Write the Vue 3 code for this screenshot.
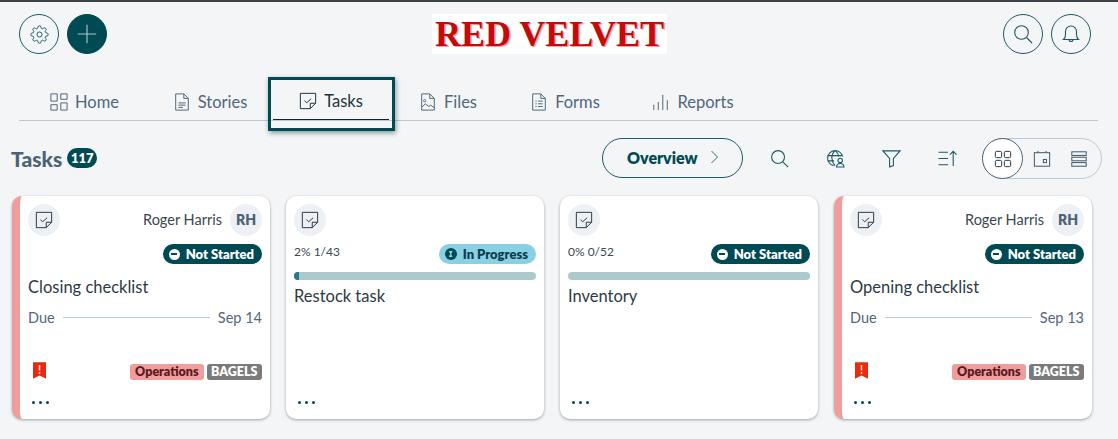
<template>
  <div class="page">
    <header class="top">
      <div class="top-left">
        <button class="round">
          <svg class="gear" viewBox="0 0 24 24"><circle cx="12" cy="12" r="3.2" /><path :d="gearPath" /></svg>
        </button>
        <button class="round solid">
          <svg class="plus" viewBox="0 0 24 24"><path d="M12 1v22M1 12h22" /></svg>
        </button>
      </div>
      <div class="logo">RED VELVET</div>
      <div class="top-right">
        <button class="round">
          <svg class="ic20" viewBox="0 0 20 20"><circle cx="8.5" cy="8.5" r="6.8" /><path d="M13.5 13.5l5.5 5.5" /></svg>
        </button>
        <button class="round">
          <svg class="ic20" viewBox="0 0 20 20"><path d="M2.5 15.5c1.6-1.4 2-2.6 2-5V7.5a5.500 5.500 0 0 1 11 0v3c0 2.400.4 3.600 2 5zM8 15.500a2 2 0 0 0 4 0" /></svg>
        </button>
      </div>
    </header>

    <nav class="tabs">
      <a v-for="tab in tabs" :key="tab.name" class="tab" :class="{ active: tab.name === 'Tasks' }" :style="{ width: tab.width + 'px' }">
        <svg class="tab-icon" viewBox="0 0 20 20"><path v-for="d in tab.paths" :key="d" :d="d" /></svg>
        <span>{{ tab.name }}</span>
      </a>
    </nav>

    <section class="toolbar">
      <h1 class="title">Tasks</h1>
      <span class="count">117</span>
      <div class="tools">
        <button class="overview">
          <span>Overview</span>
          <svg viewBox="0 0 12 20"><path d="M2 2l8 8-8 8" /></svg>
        </button>
        <svg class="tool" viewBox="0 0 20 20"><circle cx="8.500" cy="8.500" r="6.800" /><path d="M13.500 13.500l5.500 5.500" /></svg>
        <svg class="tool" viewBox="0 0 20 20">
          <path d="M17.500 8A8 8 0 1 0 8 17.500M1.500 7h16M1.500 12.500h7M9.500 1.500c-4.500 4.500-4.500 11 0 16M9.500 1.500c2.500 2.200 3.800 4.300 4 6.500" />
          <circle cx="15" cy="12" r="2.300" /><path d="M11 19c.3-2.600 1.800-3.800 4-3.800s3.700 1.200 4 3.800z" />
        </svg>
        <svg class="tool" viewBox="0 0 20 20"><path d="M1 2h18l-7 8v7.500l-4 1.500v-9z" /></svg>
        <svg class="tool" viewBox="0 0 20 20"><path d="M0.500 3.500h10M0.500 10h10M0.500 16.500h10M16 18V2.500M12.500 6L16 2.500 19.500 6" /></svg>
        <div class="views">
          <span class="view on">
            <svg viewBox="0 0 20 20"><rect x="1.500" y="1.500" width="7" height="7" rx="1.500" /><rect x="11.500" y="1.500" width="7" height="7" rx="1.500" /><rect x="1.500" y="11.500" width="7" height="7" rx="1.500" /><rect x="11.500" y="11.500" width="7" height="7" rx="1.500" /></svg>
          </span>
          <span class="view">
            <svg viewBox="0 0 20 20"><rect x="1.500" y="3" width="17" height="15" /><path d="M5.500 1v2M14.500 1v2" /><rect x="11.500" y="10.500" width="3.500" height="3.500" /></svg>
          </span>
          <span class="view">
            <svg viewBox="0 0 20 20"><rect x="2" y="2" width="16" height="4" /><rect x="2" y="8" width="16" height="4" /><rect x="2" y="14" width="16" height="4" /></svg>
          </span>
        </div>
      </div>
    </section>

    <main class="cards">
      <article v-for="card in cards" :key="card.title" class="card" :class="{ flagged: card.owner }">
        <div class="card-top">
          <span class="task-icon">
            <svg viewBox="0 0 20 20"><path d="M1.500 1.500h17v11l-6 6h-11z" /><path d="M18.500 12.500h-6v6" /><path d="M6 9.500l2.500 2.500 5-4.500" /></svg>
          </span>
          <template v-if="card.owner">
            <span class="owner">{{ card.owner }}</span>
            <span class="avatar">{{ card.initials }}</span>
          </template>
        </div>

        <div v-if="card.owner" class="status-row end">
          <span class="status dark"><i class="dot minus"></i>{{ card.status }}</span>
        </div>
        <template v-else>
          <div class="status-row">
            <span class="progress-text">{{ card.progress }}</span>
            <span class="status" :class="card.status === 'In Progress' ? 'light' : 'dark'">
              <i v-if="card.status === 'In Progress'" class="dot glass"></i>
              <i v-else class="dot minus"></i>{{ card.status }}
            </span>
          </div>
          <div class="bar"><div class="bar-fill" :style="{ width: card.percent + '%' }"></div></div>
        </template>

        <h2 class="card-title" :class="{ tight: !card.owner }">{{ card.title }}</h2>

        <div v-if="card.due" class="due">
          <span>Due</span>
          <span class="due-line"></span>
          <span>{{ card.due }}</span>
        </div>

        <div class="card-foot">
          <div v-if="card.owner" class="tags">
            <svg class="flag" viewBox="0 0 14 18"><path d="M0 0h14v18l-7-3.500L0 18z" /><path class="mark" d="M7 3v6M7 10.500v2" /></svg>
            <span class="tag pink">Operations</span>
            <span class="tag gray">BAGELS</span>
          </div>
          <div class="dots"><i></i><i></i><i></i></div>
        </div>
      </article>
    </main>
  </div>
</template>

<script setup>
const gearPath = 'M19.4 15a1.65 1.65 0 0 0 .33 1.82l.06.06a2 2 0 0 1 0 2.83 2 2 0 0 1-2.83 0l-.06-.06a1.65 1.65 0 0 0-1.82-.33 1.65 1.65 0 0 0-1 1.51V21a2 2 0 0 1-2 2 2 2 0 0 1-2-2v-.09A1.65 1.65 0 0 0 9 19.4a1.65 1.65 0 0 0-1.82.33l-.06.06a2 2 0 0 1-2.83 0 2 2 0 0 1 0-2.83l.06-.06a1.65 1.65 0 0 0 .33-1.82 1.65 1.65 0 0 0-1.51-1H3a2 2 0 0 1-2-2 2 2 0 0 1 2-2h.09A1.65 1.65 0 0 0 4.6 9a1.65 1.65 0 0 0-.33-1.82l-.06-.06a2 2 0 0 1 0-2.83 2 2 0 0 1 2.83 0l.06.06a1.65 1.65 0 0 0 1.82.33H9a1.65 1.65 0 0 0 1-1.51V3a2 2 0 0 1 2-2 2 2 0 0 1 2 2v.09a1.65 1.65 0 0 0 1 1.51 1.65 1.65 0 0 0 1.82-.33l.06-.06a2 2 0 0 1 2.83 0 2 2 0 0 1 0 2.83l-.06.06a1.65 1.65 0 0 0-.33 1.82V9a1.65 1.65 0 0 0 1.51 1H21a2 2 0 0 1 2 2 2 2 0 0 1-2 2h-.09a1.65 1.65 0 0 0-1.51 1z'

const tabs = [
  { name: 'Home', width: 131, paths: ['M1 1h7v8H1zM12 1h7v6h-7zM1 13h7v6H1zM12 11h7v8h-7z'] },
  { name: 'Stories', width: 120, paths: ['M3 1h9l5 5v13H3zM12 1v5h5M6 11h8M6 13.500h8M6 16h5'] },
  { name: 'Tasks', width: 116, paths: ['M1.500 1.500h17v11l-6 6h-11zM18.500 12.500h-6v6M6 9.500l2.500 2.500 5-4.500'] },
  { name: 'Files', width: 118, paths: ['M3 1h9l5 5v13H3zM12 1v5h5M3 16l4-4 4 3 2-1.500 4 3', 'M7.500 8.500a1.300 1.300 0 1 0 0 .1'] },
  { name: 'Forms', width: 116, paths: ['M3 1h9l5 5v13H3zM12 1v5h5M6 9h1.500M9 9h5M6 12h1.500M9 12h5M6 15h1.500M9 15h5'] },
  { name: 'Reports', width: 140, paths: ['M2 19v-6M7 19v-9M12 19V2M17 19V8'] }
]

const cards = [
  { title: 'Closing checklist', owner: 'Roger Harris', initials: 'RH', status: 'Not Started', due: 'Sep 14' },
  { title: 'Restock task', status: 'In Progress', progress: '2% 1/43', percent: 2 },
  { title: 'Inventory', status: 'Not Started', progress: '0% 0/52', percent: 0 },
  { title: 'Opening checklist', owner: 'Roger Harris', initials: 'RH', status: 'Not Started', due: 'Sep 13' }
]
</script>

<style>
html, body { margin: 0; background: #f3f5f7; overflow: hidden; }
</style>

<style scoped>
.page {
  --teal: #004a53;
  height: 439px;
  box-sizing: border-box;
  border-top: 2px solid #3b4245;
  background: #f3f5f7;
  font-family: Lato, "Noto Sans", sans-serif;
  color: #36454f;
  overflow: hidden;
}

svg { fill: none; stroke: currentColor; stroke-width: 1.2; display: block; }

.top {
  display: flex;
  align-items: center;
  justify-content: space-between;
  padding: 12px 27px 0 19px;
  height: 40px;
}
.top-left, .top-right { display: flex; gap: 8px; width: 220px; }
.top-right { justify-content: flex-end; }

.round {
  width: 40px;
  height: 40px;
  padding: 0;
  border: 1px solid #1d5a64;
  border-radius: 50%;
  background: transparent;
  color: #1d5a64;
  display: flex;
  align-items: center;
  justify-content: center;
}
.round.solid { background: var(--teal); border-color: var(--teal); color: #a3c4c7; }
.gear { width: 19px; height: 19px; stroke-width: 1.250; }
.plus { width: 20px; height: 20px; stroke-width: 1.400; }
.ic20 { width: 20px; height: 20px; stroke-width: 1.100; }

.logo {
  width: 235px;
  height: 40px;
  margin-right: 11px;
  background: #fff;
  text-align: center;
  font: bold 36px/41px "Liberation Serif", serif;
  white-space: nowrap;
  color: #c40a0a;
  text-shadow: 1.500px 1px 0 #f0a0a0;
}

.tabs {
  display: flex;
  margin: 29px 20px 0 19px;
  height: 37px;
  border-bottom: 1px solid #b8cad6;
}
.tab {
  height: 37px;
  box-sizing: border-box;
  display: flex;
  align-items: center;
  justify-content: center;
  gap: 7px;
  font-size: 16.500px;
  color: #52677a;
  position: relative;
}
.tab-icon { width: 18px; height: 18px; flex: none; stroke-width: 1.100; }
.tab.active { margin-left: 3px; color: #1f3440; border-bottom: 1px solid #14252d; }
.tab.active::after {
  content: "";
  position: absolute;
  left: -5px;
  right: -6px;
  top: -6px;
  bottom: -12px;
  border: 3px solid var(--teal);
  box-shadow: 1px 2px 5px rgba(0, 40, 45, 0.45);
}

.toolbar {
  display: flex;
  align-items: center;
  margin-top: 17px;
  height: 40px;
  padding: 0 11px;
}
.title { margin: 0; font-size: 21px; font-weight: 900; color: #4d6275; }
.count {
  margin-left: 5px;
  width: 30px;
  height: 20px;
  margin-top: -1px;
  border-radius: 10px;
  background: var(--teal);
  color: #fff;
  font-size: 13px;
  font-weight: 800;
  line-height: 20px;
  text-align: center;
}
.tools { margin-left: auto; display: flex; align-items: center; color: #1d5a64; }
.overview {
  width: 141px;
  height: 40px;
  padding: 0 23px 2px 24px;
  margin-right: 27px;
  border: 1px solid #1d5a64;
  border-radius: 20px;
  background: transparent;
  display: flex;
  align-items: center;
  justify-content: space-between;
  font: 800 16px Lato, sans-serif;
  color: var(--teal);
}
.overview svg { width: 9px; height: 16px; stroke-width: 1.200; color: #1d5a64; margin-left: 10px; }
.tool { width: 19px; height: 19px; margin-right: 37px; stroke-width: 1.150; }
.tool:nth-of-type(4) { margin-right: 25px; }
.views {
  width: 120px;
  height: 41px;
  margin: 1px 5px 0 0;
  padding-right: 3px;
  box-sizing: border-box;
  border: 1px solid #b8cad6;
  border-radius: 21px;
  display: flex;
  align-items: center;
  color: #3f5666;
}
.view { flex: 1; display: flex; align-items: center; justify-content: center; }
.view svg { width: 18px; height: 18px; stroke-width: 1.100; }
.view.on {
  flex: none;
  width: 41px;
  height: 41px;
  margin: -1px 0 -1px -1px;
  border: 1px solid #4d6275;
  border-radius: 50%;
  background: #fff;
  box-sizing: border-box;
  color: #26363f;
}

.cards {
  display: grid;
  grid-template-columns: repeat(4, 258px);
  gap: 16px;
  margin: 18px 0 0 12px;
}
.card {
  height: 223px;
  box-sizing: border-box;
  padding: 8px 8px 14px;
  background: #fff;
  border-radius: 10px;
  box-shadow: 0 1px 3px rgba(0, 0, 0, 0.35);
  display: flex;
  flex-direction: column;
  font-size: 14.500px;
}
.card.flagged { border-left: 8px solid #ef9d9d; }

.card-top { display: flex; align-items: center; height: 32px; gap: 8px; }
.task-icon {
  width: 32px;
  height: 32px;
  border-radius: 50%;
  background: #edf0f4;
  display: flex;
  align-items: center;
  justify-content: center;
  color: #2d3a44;
  margin-right: auto;
}
.task-icon svg { width: 18px; height: 18px; stroke-width: 1.100; }
.owner { color: #3a4750; padding-bottom: 2px; }
.avatar {
  width: 32px;
  height: 32px;
  border-radius: 50%;
  background: #edf0f4;
  color: #4d6275;
  font-size: 14px;
  font-weight: 800;
  line-height: 31px;
  text-align: center;
}

.status-row {
  display: flex;
  align-items: flex-start;
  justify-content: space-between;
  margin-top: 8px;
  height: 20px;
}
.status-row.end { justify-content: flex-end; }
.progress-text { font-size: 12px; line-height: 15px; color: #3a4750; }
.status {
  height: 20px;
  padding: 0 8px 0 6px;
  border-radius: 10px;
  display: flex;
  align-items: center;
  gap: 6px;
  font-size: 13px;
  font-weight: 800;
}
.status.dark { background: var(--teal); color: #fff; }
.status.light { background: #8ad0e4; color: #0f3f4d; }
.dot {
  width: 11px;
  height: 11px;
  border-radius: 50%;
  background: #fff;
  position: relative;
  flex: none;
}
.dot.minus::after {
  content: "";
  position: absolute;
  left: 2.500px;
  right: 2.500px;
  top: 4.500px;
  height: 2px;
  background: var(--teal);
}
.dot.glass { width: 12px; height: 12px; background: var(--teal); }
.dot.glass::after {
  content: "";
  position: absolute;
  left: 4px;
  top: 3px;
  width: 4px;
  height: 6px;
  background: #8ad0e4;
  clip-path: polygon(0 0, 100% 0, 60% 50%, 100% 100%, 0 100%, 40% 50%);
}

.bar {
  height: 8px;
  margin-top: 8px;
  border-radius: 4px;
  background: #acc9ce;
  overflow: hidden;
}
.bar-fill { height: 100%; background: #2a7788; }

.card-title {
  margin: 12px 0 0;
  font-size: 16.500px;
  font-weight: 400;
  line-height: 22px;
  color: #2d3a44;
}
.card-title.tight { margin-top: 5px; }

.due {
  display: flex;
  align-items: center;
  gap: 8px;
  margin-top: 9px;
  height: 20px;
  color: #52677a;
}
.due-line { flex: 1; height: 1px; background: #b8cad6; }

.card-foot { margin-top: auto; }
.tags { display: flex; align-items: center; gap: 3px; margin-bottom: 19px; }
.flag { width: 13px; height: 17px; margin: -2px auto 0 5px; align-self: flex-start; fill: #ea2a0c; stroke: none; }
.flag .mark { stroke: #fff; stroke-width: 1.600; fill: none; }
.tag {
  height: 16px;
  padding: 0 5px;
  border-radius: 3px;
  font-size: 12.500px;
  font-weight: 800;
  line-height: 16px;
}
.tag.pink { background: #ef9d9d; color: #5c1a1f; }
.tag.gray { background: #7a7a7a; color: #fff; padding: 0 4.500px; }

.dots { display: flex; gap: 4px; padding-left: 4px; height: 6px; align-items: center; }
.dots i { width: 3px; height: 3px; border-radius: 50%; background: var(--teal); }
</style>
